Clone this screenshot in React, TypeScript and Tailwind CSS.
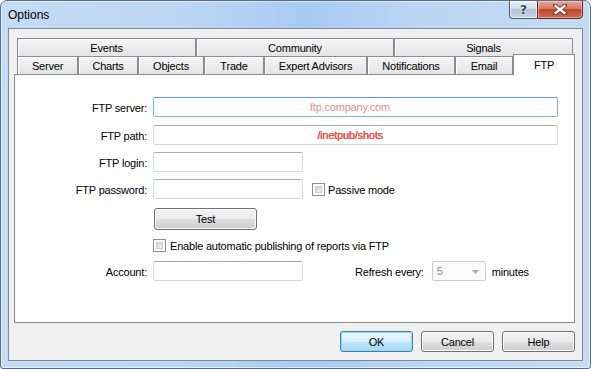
import React from "react";

const tabBase =
  "flex items-center justify-center border-l border-t border-r border-[#898c95] bg-[linear-gradient(#f5f5f5,#e4e4e4)] shadow-[inset_1px_1px_0_#ffffff] text-black";

function Tab({ w, label }: { w: number; label: string }) {
  return (
    <div className={tabBase + " h-full pt-[2px]"} style={{ width: w }}>
      <span className="leading-none">{label}</span>
    </div>
  );
}

function TextBox({ w, focused, children }: { w: number; focused?: boolean; children?: React.ReactNode }) {
  return (
    <div
      className={
        "h-[20px] rounded-[2px] border bg-white flex items-center justify-center pt-px " +
        (focused
          ? "border-[#7eb4ea] border-t-[#569de5]"
          : "border-[#d5d9de] border-t-[#abadb3]")
      }
      style={{ width: w }}
    >
      {children}
    </div>
  );
}

function CheckBox() {
  return (
    <div className="w-[13px] h-[13px] border border-[#8e8f8f] bg-white p-[2px] shrink-0">
      <div className="w-full h-full bg-[linear-gradient(135deg,#cdd1d6,#f4f4f4)] border border-[#c9ccd1]" />
    </div>
  );
}

function Btn({ w, h, label, def }: { w: number; h: number; label: string; def?: boolean }) {
  return (
    <div
      className={
        "flex items-center justify-center rounded-[3px] border text-black pt-px " +
        (def
          ? "border-[#3c7fb1] shadow-[inset_0_0_0_1px_#9fd5f4] bg-[linear-gradient(#eaf6fd_0%,#d9f0fc_50%,#bee6fd_51%,#a7d9f5_100%)]"
          : "border-[#707070] shadow-[inset_0_0_0_1px_#fbfbfb] bg-[linear-gradient(#f2f2f2_0%,#ebebeb_50%,#dddddd_51%,#cfcfcf_100%)]")
      }
      style={{ width: w, height: h }}
    >
      {label}
    </div>
  );
}

function Label({ children }: { children: React.ReactNode }) {
  return <div className="w-[132px] text-right shrink-0 pt-[2px]">{children}</div>;
}

export default function App() {
  return (
    <div className="w-[591px] h-[369px] bg-white">
      <div className="w-[591px] h-[369px] flex flex-col rounded-t-[7px] rounded-b-[3px] border border-[#5a6c84] bg-[linear-gradient(90deg,#c4dbf4_0%,#bcd7f4_30%,#a8cbf1_52%,#bad6f4_70%,#c6dcf3_100%)] font-['Liberation_Sans',Arial,sans-serif] text-[11px] tracking-[-0.2px] text-black overflow-hidden shadow-[inset_0_0_0_1px_rgba(255,255,255,0.55)]">
        {/* title bar */}
        <div className="h-[27px] flex items-start shrink-0">
          <div className="pl-[7px] pt-[7px] text-[12px] tracking-normal leading-[14px] text-black">Options</div>
          <div className="ml-auto mr-[7px] flex -mt-px">
            <div className="w-[28px] h-[19px] rounded-bl-[4px] border border-[#4e5b6d] border-r-0 bg-[linear-gradient(#e6eef7_0%,#cfdbe8_45%,#b4c4d6_50%,#c6d4e4_100%)] flex items-center justify-center shadow-[inset_0_0_0_1px_rgba(255,255,255,0.6)]">
              <span className="font-['DejaVu_Sans',sans-serif] font-bold text-[12px] leading-none text-[#3b4656] [text-shadow:0_0_2px_#fff]">?</span>
            </div>
            <div className="w-[46px] h-[19px] rounded-br-[4px] border border-[#4e2b26] bg-[linear-gradient(#e9a99b_0%,#d9785f_45%,#c4442a_50%,#d4694d_100%)] flex items-center justify-center shadow-[inset_0_0_0_1px_rgba(255,220,210,0.55)]">
              <svg width="14" height="11" viewBox="0 0 14 11">
                <path d="M2 1.5 L12 9.5 M12 1.5 L2 9.5" stroke="#5a2a20" strokeWidth="4" strokeLinecap="round" />
                <path d="M2.5 2 L11.5 9 M11.5 2 L2.5 9" stroke="#ffffff" strokeWidth="2.4" strokeLinecap="square" />
              </svg>
            </div>
          </div>
        </div>

        {/* client */}
        <div className="mx-[7px] mb-[7px] flex-1 border border-[#7f8a99] bg-[#f0f0f0] flex flex-col pl-[5px] pr-[7px] pt-[9px]">
          {/* tab control */}
          <div className="flex flex-col w-[561px]">
            <div className="flex h-[18px] ml-[3px]">
              <Tab w={179} label="Events" />
              <Tab w={198} label="Community" />
              <Tab w={179} label="Signals" />
            </div>
            <div className="flex h-[18px] ml-[3px] items-end relative z-10">
              <Tab w={61} label="Server" />
              <Tab w={60} label="Charts" />
              <Tab w={66} label="Objects" />
              <Tab w={60} label="Trade" />
              <Tab w={103} label="Expert Advisors" />
              <Tab w={88} label="Notifications" />
              <Tab w={58} label="Email" />
              <div className="w-[62px] h-[21px] -mb-px self-end border-l border-t border-r border-[#898c95] bg-white flex justify-center pt-[5px]">
                <span className="leading-none">FTP</span>
              </div>
            </div>
            {/* panel */}
            <div className="h-[249px] border border-[#898c95] bg-white flex flex-col">
              <div className="flex items-center gap-[6px] mt-[22px] h-[20px]">
                <Label>FTP server:</Label>
                <TextBox w={405} focused>
                  <span className="text-[#f08a8a] pr-[11px]">ftp.company.com</span>
                </TextBox>
              </div>
              <div className="flex items-center gap-[6px] mt-[8px] h-[20px]">
                <Label>FTP path:</Label>
                <TextBox w={405}>
                  <span className="text-[#f04b4b] pr-[11px] [text-shadow:0.3px_0_0_#f04b4b]">/inetpub/shots</span>
                </TextBox>
              </div>
              <div className="flex items-center gap-[6px] mt-[7px] h-[20px]">
                <Label>FTP login:</Label>
                <TextBox w={150} />
              </div>
              <div className="flex items-center gap-[6px] mt-[7px] h-[20px]">
                <Label>FTP password:</Label>
                <TextBox w={150} />
                <div className="ml-[3px] flex items-center gap-[3px]">
                  <CheckBox />
                  <span className="pt-[2px]">Passive mode</span>
                </div>
              </div>
              <div className="flex mt-[9px] ml-[139px]">
                <Btn w={103} h={22} label="Test" />
              </div>
              <div className="flex items-center gap-[4px] mt-[9px] ml-[138px] h-[13px]">
                <CheckBox />
                <span className="pt-[2px]">Enable automatic publishing of reports via FTP</span>
              </div>
              <div className="flex items-center gap-[6px] mt-[9px] h-[20px]">
                <Label>Account:</Label>
                <TextBox w={150} />
                <span className="ml-[46px] pt-[2px]">Refresh every:</span>
                <div className="ml-[2px] w-[54px] h-[20px] rounded-[2px] border border-[#c9cbcf] bg-[#fbfbfb] flex items-center pl-[4px] pr-[6px] pt-px">
                  <span className="text-[#8d8d8d]">5</span>
                  <svg className="ml-auto" width="7" height="4" viewBox="0 0 7 4">
                    <path d="M0 0 H7 L3.5 4 Z" fill="#a9a9a9" />
                  </svg>
                </div>
                <span className="pt-[2px]">minutes</span>
              </div>
            </div>
          </div>
          {/* bottom buttons */}
          <div className="flex justify-end gap-[8px] mt-[8px]">
            <Btn w={73} h={21} label="OK" def />
            <Btn w={73} h={21} label="Cancel" />
            <Btn w={73} h={21} label="Help" />
          </div>
        </div>
      </div>
    </div>
  );
}
